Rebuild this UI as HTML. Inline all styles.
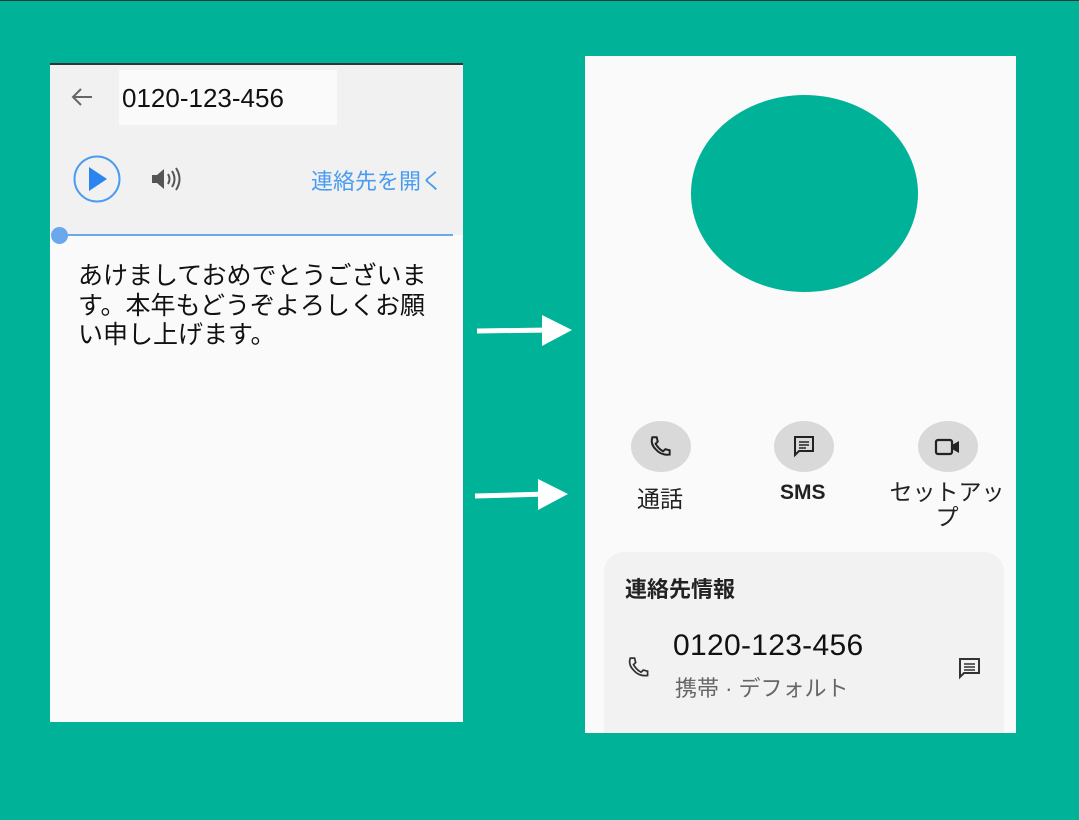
<!DOCTYPE html>
<html><head><meta charset="utf-8"><style>
*{margin:0;padding:0;box-sizing:border-box}
body{width:1079px;height:820px;background:#00b398;position:relative;overflow:hidden;font-family:"Liberation Sans","Noto Sans CJK JP",sans-serif}
.a{position:absolute}
</style></head><body>
<div class="a" style="left:0;top:0;width:1079px;height:1px;background:#1a3a35"></div>
<!-- left panel -->
<div class="a" style="left:50px;top:63px;width:413px;height:659px;background:#fafafa;border-top:2px solid #333"></div>
<div class="a" style="left:50px;top:65px;width:413px;height:170px;background:#f1f1f1"></div>
<div class="a" style="left:119px;top:70px;width:218px;height:55px;background:#fafafa"></div>
<svg class="a" style="left:70px;top:86px" width="24" height="22" viewBox="0 0 24 22"><path d="M22 11H4M11 3L3 11l8 8" stroke="#666" stroke-width="2" fill="none"/></svg>
<div class="a" style="left:122px;top:83px;font-size:26px;color:#111">0120-123-456</div>
<svg class="a" style="left:72px;top:154px" width="50" height="50"><circle cx="25" cy="25" r="22.5" stroke="#4a9cf0" stroke-width="2" fill="none"/><path d="M17 13L35 25L17 37Z" fill="#2b84f0"/></svg>
<svg class="a" style="left:150px;top:165px" width="36" height="28" viewBox="0 0 36 28"><path d="M2 10h5l7-6v20l-7-6H2z" fill="#555"/><path d="M18 9q3 5 0 10M22 6q5 8 0 16M26 3q7 11 0 22" stroke="#555" stroke-width="2" fill="none"/></svg>
<div class="a" style="left:311px;top:164px;font-size:22px;color:#4a9cf0">連絡先を開く</div>
<div class="a" style="left:58px;top:234px;width:395px;height:2px;background:#6aa8ee"></div>
<div class="a" style="left:51px;top:227px;width:17px;height:17px;border-radius:50%;background:#6aa8ee"></div>
<div class="a" style="left:78px;top:262px;font-size:25px;line-height:29.5px;color:#111;width:362px">あけましておめでとうございます。本年もどうぞよろしくお願い申し上げます。</div>
<!-- arrows -->
<svg class="a" style="left:470px;top:305px" width="110" height="220"><path d="M7 26L80 25" stroke="#fff" stroke-width="5"/><path d="M72 10L102 25L72 41Z" fill="#fff"/><path d="M5 191L78 189" stroke="#fff" stroke-width="5"/><path d="M68 174L98 189L68 205Z" fill="#fff"/></svg>
<!-- right panel -->
<div class="a" style="left:585px;top:56px;width:431px;height:677px;background:#fafafa;overflow:hidden">
<div class="a" style="left:19px;top:496px;width:400px;height:200px;border-radius:20px;background:#f2f2f2"></div>
</div>
<div class="a" style="left:691px;top:95px;width:227px;height:197px;border-radius:50%;background:#00b398"></div>
<div class="a" style="left:631px;top:421px;width:60px;height:51px;border-radius:50%;background:#d9d9d9"></div>
<div class="a" style="left:774px;top:421px;width:60px;height:51px;border-radius:50%;background:#d9d9d9"></div>
<div class="a" style="left:918px;top:421px;width:60px;height:51px;border-radius:50%;background:#d9d9d9"></div>
<svg class="a" style="left:648px;top:434px" width="26" height="26" viewBox="0 0 24 24"><path d="M4 3l4 0 1 4-2 2q3 5 7 7l2-2 4 1v4q-8 1-13-5Q2 9 4 3z" stroke="#222" stroke-width="1.8" fill="none"/></svg>
<svg class="a" style="left:792px;top:434px" width="24" height="24" viewBox="0 0 24 24"><path d="M3 3h18v14H7l-4 4z" stroke="#222" stroke-width="2" fill="none"/><path d="M7 8h10M7 11h10M7 14h7" stroke="#222" stroke-width="1.6"/></svg>
<svg class="a" style="left:934px;top:436px" width="28" height="22" viewBox="0 0 28 22"><rect x="2" y="4" width="16" height="14" rx="2" stroke="#222" stroke-width="2.2" fill="none"/><path d="M18 9l7-4v12l-7-4z" fill="#222"/></svg>
<div class="a" style="left:637px;top:480px;font-size:23px;color:#222">通話</div>
<div class="a" style="left:780px;top:481px;font-size:21px;color:#222;font-weight:bold">SMS</div>
<div class="a" style="left:887px;top:480px;width:120px;text-align:center;font-size:23px;line-height:25px;color:#222">セットアップ</div>
<div class="a" style="left:625px;top:572px;font-size:22px;color:#222;font-weight:bold">連絡先情報</div>
<svg class="a" style="left:626px;top:656px" width="28" height="26" viewBox="0 0 24 24"><path d="M3 2l4 0 1 4-2 2q3 5 7 7l2-2 4 1v4q-8 1-13-5Q1 8 3 2z" stroke="#333" stroke-width="1.6" fill="none"/></svg>
<div class="a" style="left:673px;top:629px;font-size:30px;color:#111;letter-spacing:0.3px">0120-123-456</div>
<div class="a" style="left:675px;top:671px;font-size:22px;color:#666">携帯 · デフォルト</div>
<svg class="a" style="left:957px;top:656px" width="26" height="24" viewBox="0 0 24 24"><path d="M2 3h19v14H6l-4 4z" stroke="#333" stroke-width="2" fill="none"/><path d="M6 8h11M6 11h11M6 14h11" stroke="#333" stroke-width="1.6"/></svg>
</body></html>
